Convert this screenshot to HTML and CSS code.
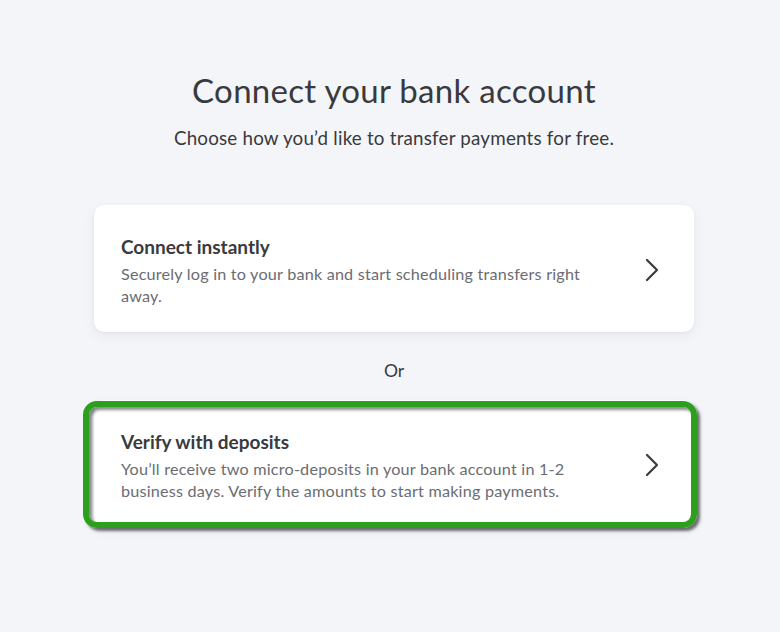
FILE: index.html
```html
<!DOCTYPE html>
<html lang="en">
<head>
<meta charset="utf-8">
<title>Connect your bank account</title>
<link rel="stylesheet" href="styles.css">
</head>
<body>
<main class="page">
  <h1 class="title">Connect your bank account</h1>
  <p class="subtitle">Choose how you’d like to transfer payments for free.</p>

  <div class="options">
    <a class="card" href="#">
      <div class="card-text">
        <div class="card-title">Connect instantly</div>
        <div class="card-desc">Securely log in to your bank and start scheduling transfers right away.</div>
      </div>
      <svg class="chevron" width="14" height="24" viewBox="0 0 14 24" aria-hidden="true">
        <path d="M2 2 L12 12 L2 22" fill="none" stroke="#393a3d" stroke-width="2.2" stroke-linecap="round" stroke-linejoin="round"/>
      </svg>
    </a>

    <div class="or">Or</div>

    <a class="card highlighted" href="#">
      <div class="card-text">
        <div class="card-title">Verify with deposits</div>
        <div class="card-desc">You’ll receive two micro-deposits in your bank account in 1-2 business days. Verify the amounts to start making payments.</div>
      </div>
      <svg class="chevron" width="14" height="24" viewBox="0 0 14 24" aria-hidden="true">
        <path d="M2 2 L12 12 L2 22" fill="none" stroke="#393a3d" stroke-width="2.2" stroke-linecap="round" stroke-linejoin="round"/>
      </svg>
      <span class="annotation"></span>
    </a>
  </div>
</main>
</body>
</html>
```

FILE: styles.css
```css
html, body {
  margin: 0;
  padding: 0;
}

body {
  background: #f4f5f8;
  font-family: Lato, "Noto Sans", "Liberation Sans", sans-serif;
  color: #393a3d;
  width: 780px;
  height: 632px;
  overflow: hidden;
}

.page {
  display: flex;
  flex-direction: column;
  align-items: center;
  padding-top: 72px;
  padding-left: 8px;
}

.title {
  margin: 0;
  font-size: 33px;
  line-height: 36px;
  font-weight: 400;
  color: #393a3d;
  letter-spacing: 0.3px;
}

.subtitle {
  margin: 18px 0 0;
  font-size: 18.8px;
  line-height: 24px;
  color: #393a3d;
  letter-spacing: 0.2px;
}

.options {
  width: 600px;
  margin-top: 55px;
  display: flex;
  flex-direction: column;
}

.card {
  position: relative;
  display: flex;
  align-items: center;
  justify-content: space-between;
  box-sizing: border-box;
  height: 127px;
  padding: 0 35px 0 27px;
  background: #ffffff;
  border-radius: 10px;
  text-decoration: none;
  color: inherit;
  box-shadow: 0 1px 3px rgba(0, 0, 0, 0.05), 0 4px 14px rgba(0, 0, 0, 0.05);
}

.card-text {
  width: 490px;
  margin-top: 4px;
}

.card-title {
  font-size: 19px;
  line-height: 24px;
  font-weight: 700;
  color: #393a3d;
}

.card-desc {
  margin-top: 4px;
  font-size: 16.2px;
  line-height: 22px;
  color: #6b6c72;
  letter-spacing: 0.2px;
}

.chevron {
  flex: none;
  margin-top: 2px;
}

.or {
  height: 68px;
  line-height: 78px;
  text-align: center;
  font-size: 17.5px;
  color: #393a3d;
  box-sizing: border-box;
}

.annotation {
  position: absolute;
  left: -11px;
  top: 1px;
  right: -3px;
  bottom: -1px;
  border: 6px solid #2ca01c;
  border-radius: 14px;
  box-shadow: 3px 3px 3px rgba(0, 0, 0, 0.55), inset 3px 3px 3px rgba(0, 0, 0, 0.45);
  pointer-events: none;
}
```
